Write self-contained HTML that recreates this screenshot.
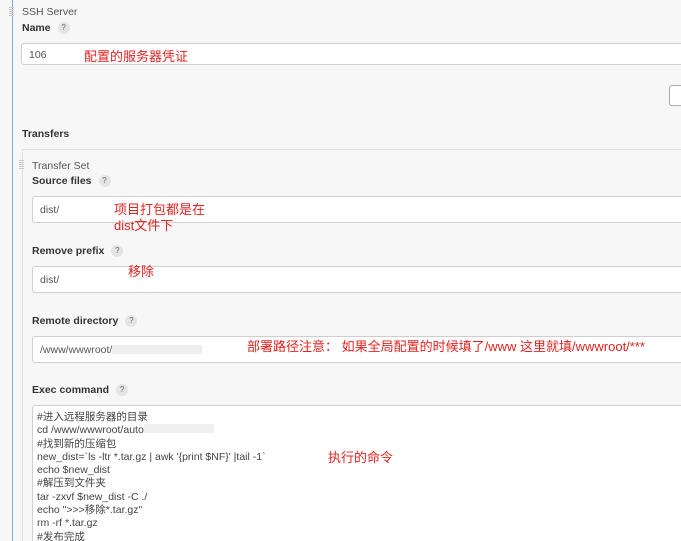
<!DOCTYPE html>
<html><head><meta charset="utf-8"><style>
*{margin:0;padding:0;box-sizing:border-box}
html,body{width:681px;height:541px;overflow:hidden}
body{background:#f7f7f7;position:relative;font-family:"Liberation Sans","Noto Sans CJK SC",sans-serif;color:#333}
.a{position:absolute;white-space:nowrap}
.lbl{font-size:10.5px;font-weight:bold;color:#333}
.q{display:inline-block;width:12px;height:12px;border-radius:6px;background:#e4e4e4;color:#666;font-size:8px;text-align:center;line-height:12px;margin-left:7px;font-weight:normal;vertical-align:1px}
.inp{position:absolute;background:#fff;border:1px solid #cfcfcf;border-radius:3px;font-size:10.5px;color:#555;padding-left:7px}
.red{position:absolute;color:#e3231f;font-size:13px;white-space:nowrap}
.grip{position:absolute;width:5px;height:10px;background:repeating-linear-gradient(#ccc 0 1px,transparent 1px 2px)}
.code{position:absolute;left:37px;top:411px;font-size:10.5px;line-height:13.3px;color:#444;white-space:pre}
</style></head><body>
<div class="a" style="left:12px;top:0;width:1px;height:541px;background:#8aa6d6"></div>
<div class="grip" style="left:9px;top:7px"></div>
<div class="a" style="left:22px;top:6px;font-size:10.5px;color:#555">SSH Server</div>
<div class="a lbl" style="left:22px;top:22px">Name<span class="q">?</span></div>
<div class="inp" style="left:21px;top:43px;width:680px;height:22px;line-height:22px">106</div>
<div class="red" style="left:84px;top:46px">配置的服务器凭证</div>
<div class="a" style="left:669px;top:85px;width:20px;height:21px;border:1px solid #aaa;border-radius:3px;background:#fff"></div>
<div class="a lbl" style="left:22px;top:128px">Transfers</div>
<div class="a" style="left:22px;top:149px;width:670px;height:400px;border:1px solid #e2e2e2;background:#f7f7f7"></div>
<div class="grip" style="left:19px;top:160px"></div>
<div class="a" style="left:32px;top:160px;font-size:10.5px;color:#555">Transfer Set</div>
<div class="a lbl" style="left:32px;top:175px">Source files<span class="q">?</span></div>
<div class="inp" style="left:32px;top:196px;width:670px;height:27px;line-height:27px">dist/</div>
<div class="red" style="left:114px;top:202px;line-height:16px">项目打包都是在<br>dist文件下</div>
<div class="a lbl" style="left:32px;top:245px">Remove prefix<span class="q">?</span></div>
<div class="inp" style="left:32px;top:266px;width:670px;height:27px;line-height:27px">dist/</div>
<div class="red" style="left:128px;top:261px">移除</div>
<div class="a lbl" style="left:32px;top:315px">Remote directory<span class="q">?</span></div>
<div class="inp" style="left:32px;top:336px;width:670px;height:27px;line-height:27px">/www/wwwroot/<span style="display:inline-block;width:90px;height:9px;background:#eee;vertical-align:-1px"></span></div>
<div class="red" style="left:247px;top:336px">部署路径注意： 如果全局配置的时候填了/www 这里就填/wwwroot/***</div>
<div class="a lbl" style="left:32px;top:384px">Exec command<span class="q">?</span></div>
<div class="inp" style="left:32px;top:405px;width:670px;height:150px"></div>
<div class="code">#进入远程服务器的目录
cd /www/wwwroot/auto<span style="display:inline-block;width:70px;height:9px;background:#f0f0f0"></span>
#找到新的压缩包
new_dist=`ls -ltr *.tar.gz | awk '{print $NF}' |tail -1`
echo $new_dist
#解压到文件夹
tar -zxvf $new_dist -C ./
echo "&gt;&gt;&gt;移除*.tar.gz"
rm -rf *.tar.gz
#发布完成</div>
<div class="red" style="left:328px;top:447px">执行的命令</div>
</body></html>
